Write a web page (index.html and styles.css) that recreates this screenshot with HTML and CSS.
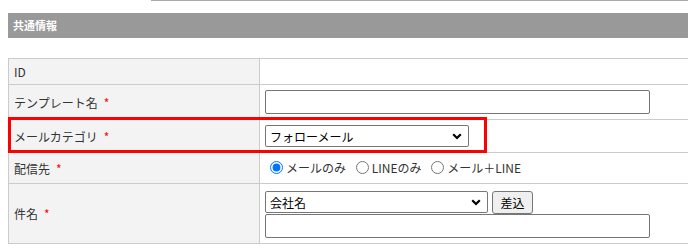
FILE: index.html
```html
<!DOCTYPE html>
<html lang="ja">
<head>
    <meta charset="UTF-8">
    <title>共通情報</title>
    <link rel="stylesheet" href="styles.css">
</head>
<body>
<div class="top-line"></div>
<h2 class="section-title">共通情報</h2>
<div class="form-area">
    <table class="form-table">
        <tr class="row-id">
            <th>ID</th>
            <td></td>
        </tr>
        <tr class="row-name">
            <th>テンプレート名<span class="req">*</span></th>
            <td><input type="text" class="text-long"></td>
        </tr>
        <tr class="row-category">
            <th>メールカテゴリ<span class="req">*</span></th>
            <td>
                <select class="sel-category">
                    <option>フォローメール</option>
                </select>
            </td>
        </tr>
        <tr class="row-dest">
            <th>配信先<span class="req">*</span></th>
            <td>
                <label class="radio"><input type="radio" name="dest" checked>メールのみ</label>
                <label class="radio"><input type="radio" name="dest">LINEのみ</label>
                <label class="radio"><input type="radio" name="dest">メール＋LINE</label>
            </td>
        </tr>
        <tr class="row-subject">
            <th>件名<span class="req">*</span></th>
            <td>
                <div class="insert-line">
                    <select class="sel-insert">
                        <option>会社名</option>
                    </select>
                    <button type="button" class="btn-insert">差込</button>
                </div>
                <input type="text" class="text-long">
            </td>
        </tr>
    </table>
    <!-- 強調枠 -->
    <div class="highlight"></div>
</div>
</body>
</html>
```

FILE: styles.css
```css
 *{
     margin: 0;
     padding: 0;
     box-sizing: border-box;
 }
 body{
     margin: 0 0 0 8px;
     font-family: "Noto Sans CJK JP", "Noto Sans", sans-serif;
     font-size: 12px;
     color: #333;
     background: #fff;
     overflow: hidden;
 }
 .top-line{
     margin-left: 143px;
     height: 1px;
     background-color: #aaa;
 }
 .section-title{
     margin-top: 12px;
     height: 25px;
     padding-left: 5px;
     line-height: 24px;
     font-size: 11px;
     font-weight: bold;
     color: #fff;
     background-color: #999;
 }
 .form-area{
     position: relative;
     margin-top: 20px;
 }
 .form-table{
     width: 100%;
     border-collapse: collapse;
 }
 .form-table th,
 .form-table td{
     border: 1px solid #cbcbcb;
     padding: 0 5px;
     vertical-align: middle;
     text-align: left;
     font-weight: normal;
 }
 .form-table td{
     border-right: none;
 }
 .form-table th{
     width: 251px;
     background-color: #f2f3f2;
 }
 .row-id th{
     height: 26px;
 }
 .row-name th{
     height: 35px;
 }
 .row-category th{
     height: 33px;
 }
 .row-dest th{
     height: 31px;
 }
 .row-subject th{
     height: 60px;
 }
 .req{
     margin-left: 6px;
     color: #f00;
 }
 input, select, button{
     font-family: "Noto Sans CJK JP", "Noto Sans", sans-serif;
     font-size: 12px;
     color: #000;
 }
 select{
     -webkit-appearance: none;
     appearance: none;
     background: #fff url("data:image/svg+xml,%3Csvg xmlns='http://www.w3.org/2000/svg' width='10' height='7' viewBox='0 0 10 7'%3E%3Cpath d='M1.2 1.2 5 5 8.8 1.2' fill='none' stroke='%23000' stroke-width='2.2'/%3E%3C/svg%3E") no-repeat right 6px center;
 }
 .text-long{
     display: block;
     width: 385px;
     height: 24px;
     border: 1px solid #767676;
     border-radius: 2px;
     padding: 0 3px;
 }
 .sel-category{
     display: block;
     width: 204px;
     height: 22px;
     border: 1px solid #767676;
     border-radius: 2px;
     padding: 0 4px;
 }
 .radio{
     display: inline-flex;
     align-items: center;
     margin-right: 2px;
 }
 .radio input{
     width: 13px;
     height: 13px;
     margin: 0 3px 0 5px;
 }
 .insert-line{
     display: flex;
     align-items: center;
     gap: 4px;
     padding-top: 1px;
 }
 .sel-insert{
     width: 223px;
     height: 22px;
     border: 1px solid #767676;
     border-radius: 2px;
     padding: 0 4px;
 }
 .btn-insert{
     width: 41px;
     height: 23px;
     background-color: #efefef;
     border: 1px solid #767676;
     border-radius: 3px;
 }
 .highlight{
     position: absolute;
     left: 0;
     top: 59px;
     width: 479px;
     height: 36px;
     border: 3px solid #f00;
     pointer-events: none;
 }
```
